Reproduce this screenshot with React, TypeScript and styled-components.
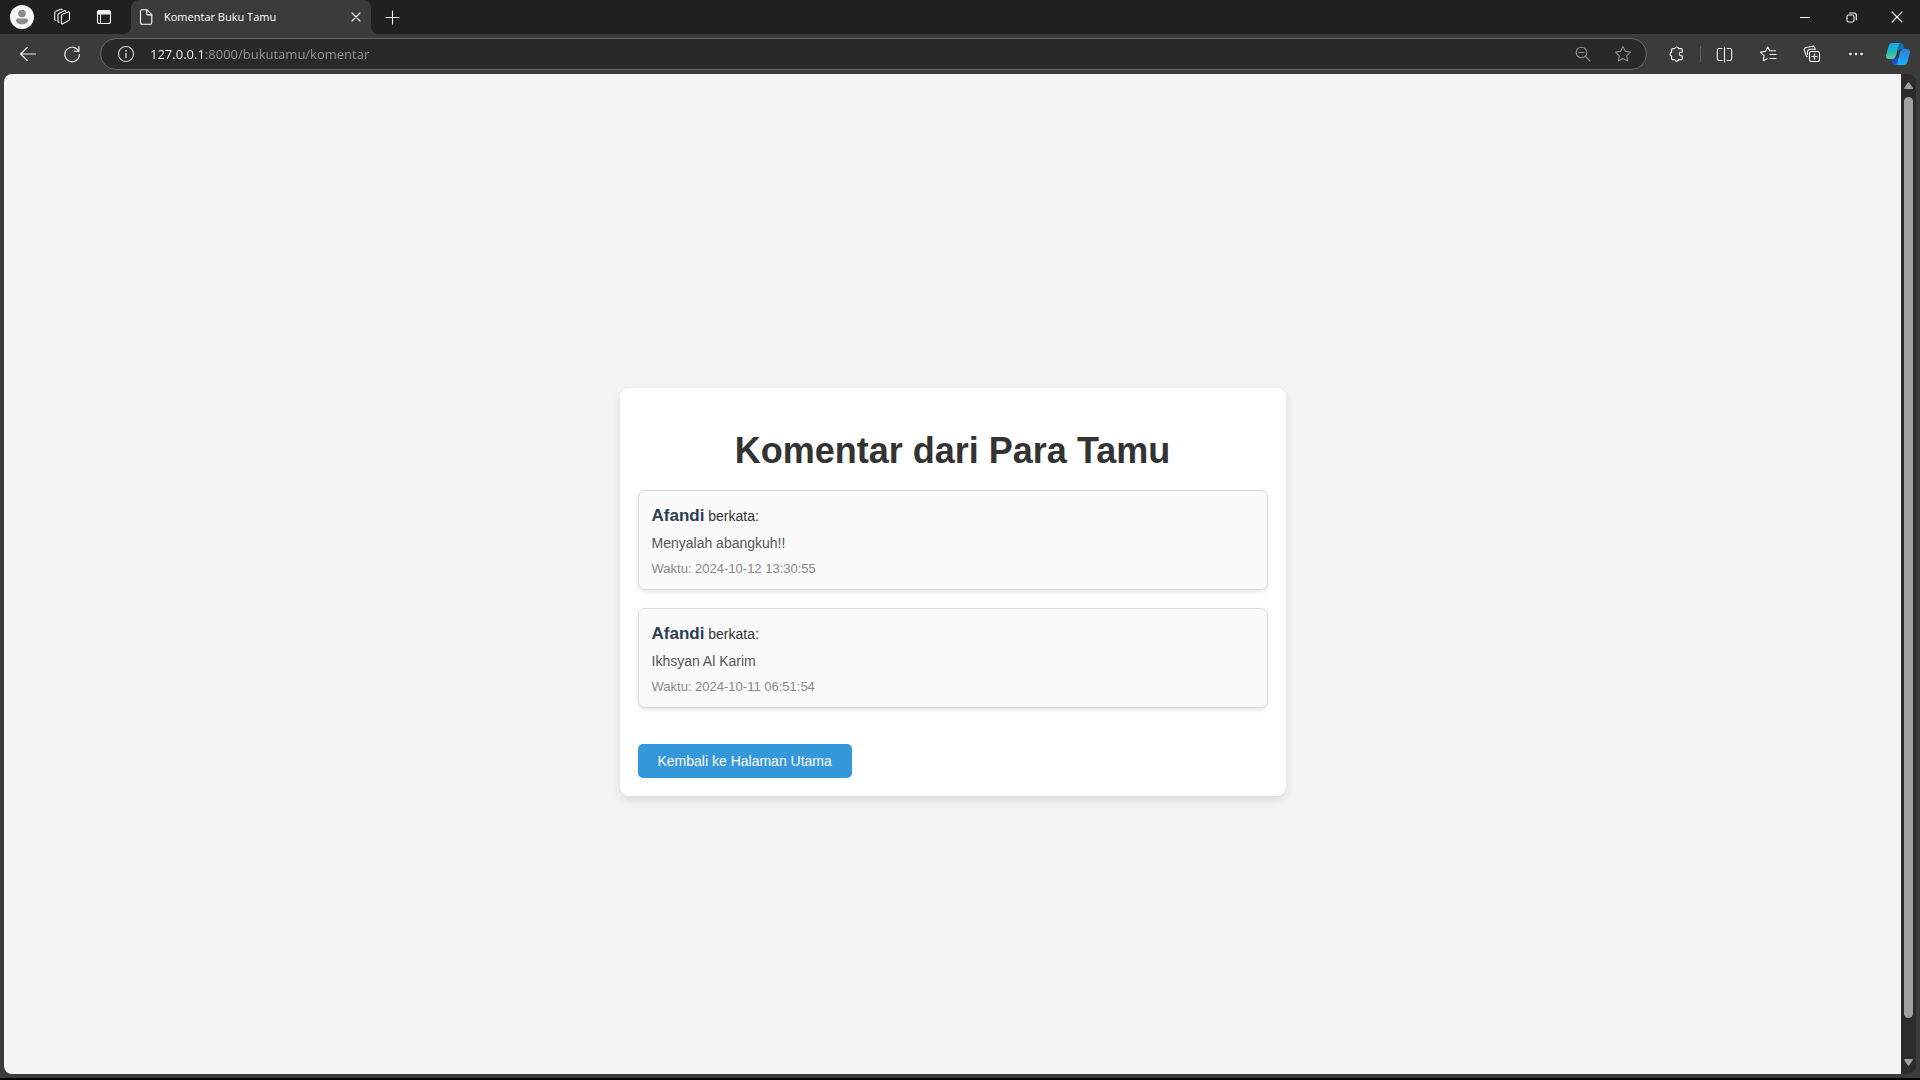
import React from "react";
import styled, { createGlobalStyle } from "styled-components";

const GlobalStyle = createGlobalStyle`
  *, *::before, *::after { box-sizing: border-box; }
  body { margin: 0; background: #000; }
  button { border: 0; padding: 0; background: none; color: inherit; font: inherit; cursor: pointer; }
`;

const uiFont = `"Segoe UI", "Open Sans", "Noto Sans", sans-serif`;

/* ---------- browser chrome ---------- */

const Browser = styled.div`
  display: flex;
  flex-direction: column;
  height: 100vh;
  background: #3b3b3b;
  border-bottom: 2px solid #000;
  color: #fff;
  font-family: ${uiFont};
`;

const TabStrip = styled.header`
  display: flex;
  align-items: stretch;
  height: 34px;
  background: #202020;
`;

const StripTools = styled.div`
  display: flex;
  align-items: center;
  width: 131px;
`;

const IconButton = styled.button<{ $width?: number }>`
  display: flex;
  flex: none;
  align-items: center;
  align-self: center;
  justify-content: center;
  width: ${(p) => p.$width ?? 44}px;
  height: 32px;
  color: ${(p) => p.color ?? "#f4f4f4"};
`;

const Tab = styled.div`
  position: relative;
  display: flex;
  align-items: center;
  gap: 10px;
  width: 240px;
  padding: 0 7px;
  background: #3b3b3b;
  border-radius: 8px 8px 0 0;

  &::before,
  &::after {
    content: "";
    position: absolute;
    bottom: 0;
    width: 8px;
    height: 8px;
  }
  &::before {
    right: 100%;
    background: radial-gradient(circle at 0 0, transparent 8px, #3b3b3b 8px);
  }
  &::after {
    left: 100%;
    background: radial-gradient(circle at 100% 0, transparent 8px, #3b3b3b 8px);
  }
`;

const TabTitle = styled.span`
  flex: 1;
  font-size: 11px;
  line-height: 16px;
  white-space: nowrap;
`;

const WindowControls = styled.div`
  display: flex;
  margin-left: auto;
`;

const Toolbar = styled.nav`
  display: flex;
  align-items: center;
  height: 40px;
  padding: 0 2px 0 6px;
`;

const AddressBar = styled.form`
  display: flex;
  flex: 1;
  align-items: center;
  height: 32px;
  margin: 0 7px 0 6px;
  padding: 0 3px;
  border: 1px solid #686868;
  border-radius: 16px;
  background: #292929;
`;

const AddressInput = styled.input`
  flex: 1;
  min-width: 0;
  height: 24px;
  padding: 0 0 0 2px;
  border: 0;
  outline: 0;
  color: #fff;
  background: linear-gradient(90deg, #fff 56px, #989898 56px);
  -webkit-background-clip: text;
  background-clip: text;
  -webkit-text-fill-color: transparent;
  font-family: ${uiFont};
  font-size: 13px;
`;

const Divider = styled.span`
  width: 1px;
  height: 16px;
  margin: 0 1px 0 2px;
  background: #5e5e5e;
`;

const Viewport = styled.div`
  display: flex;
  flex: 1;
  min-height: 0;
  margin: 0 4px 4px;
  border-radius: 8px;
  overflow: hidden;
`;

const ScrollBar = styled.div`
  display: flex;
  flex-direction: column;
  align-items: center;
  gap: 8px;
  width: 15px;
  padding: 8px 0;
  background: #2c2c2c;
  color: #9f9f9f;
`;

const ScrollTrack = styled.div`
  flex: 1;
  width: 9px;
`;

const ScrollThumb = styled.div`
  height: 96.5%;
  border-radius: 5px;
  background: #9f9f9f;
`;

/* ---------- guest book page ---------- */

const Page = styled.main`
  display: flex;
  flex: 1;
  align-items: center;
  justify-content: center;
  padding: 36px 18px 0;
  background: #f4f4f4;
  color: #333;
  font-family: Arial, "Liberation Sans", sans-serif;
  font-size: 14px;
`;

const Panel = styled.section`
  width: 100%;
  max-width: 666px;
  padding: 18px;
  border-radius: 9px;
  background: #fff;
  box-shadow: 0 4px 11px rgba(0, 0, 0, 0.1);
`;

const Heading = styled.h1`
  margin: 24px 0 18px;
  font-size: 36px;
  line-height: 42px;
  text-align: center;
`;

const CommentList = styled.ul`
  display: flex;
  flex-direction: column;
  gap: 18px;
  margin: 0 0 36px;
  padding: 0;
  list-style: none;
`;

const Comment = styled.li`
  display: flex;
  flex-direction: column;
  gap: 9px;
  padding: 14px 13px 10px;
  border: 1px solid #ddd;
  border-radius: 7px;
  background: #fafafa;
  box-shadow: 0 2px 4px rgba(0, 0, 0, 0.1);
`;

const Author = styled.div`
  line-height: 22px;

  strong {
    color: #2c3e50;
    font-size: 17px;
  }
`;

const Message = styled.p`
  margin: 0;
  color: #555;
  line-height: 14px;
`;

const Time = styled.time`
  color: #888;
  font-size: 13px;
  line-height: 20px;
`;

const BackLink = styled.a`
  display: block;
  width: fit-content;
  padding: 9px 20px;
  border-radius: 5px;
  background: #3498db;
  color: #fff;
  line-height: 16px;
  text-decoration: none;
`;

/* ---------- icons ---------- */

type IconProps = { size?: number; children: React.ReactNode };

const Icon = ({ size = 16, children }: IconProps) => (
  <svg
    width={size}
    height={size}
    viewBox={`0 0 ${size} ${size}`}
    fill="none"
    stroke="currentColor"
    strokeWidth="1.1"
    strokeLinecap="round"
    strokeLinejoin="round"
    aria-hidden="true"
  >
    {children}
  </svg>
);

const AvatarIcon = () => (
  <Icon size={24}>
    <circle cx="12" cy="12" r="12" fill="#f7f7f7" stroke="none" />
    <circle cx="12" cy="8.6" r="3.8" fill="#8b8b8b" stroke="none" />
    <path d="M7.6 13.6h8.8a1.6 1.6 0 0 1 1.6 1.6c0 2.400-2.500 4-6 4s-6-1.600-6-4a1.600 1.600 0 0 1 1.600-1.600z" fill="#8b8b8b" stroke="none" />
  </Icon>
);

const WorkspacesIcon = () => (
  <Icon size={18}>
    <path d="M9.200 6.600l5.800-2.600a1 1 0 0 1 1.500.9v6.300a1.600 1.600 0 0 1-.9 1.400l-5.700 3.200a1 1 0 0 1-1.500-.9V7.900a1.400 1.400 0 0 1 .8-1.300z" />
    <path d="M6.200 14.300a1.100 1.100 0 0 1-1.200-1.100V6.700a1.400 1.400 0 0 1 .8-1.300l5.400-2.600a1.200 1.200 0 0 1 1.600.5" />
    <path d="M2.900 12.400a1.100 1.100 0 0 1-1.200-1.100V4.900a1.400 1.400 0 0 1 .8-1.300l5-2.300a1.200 1.200 0 0 1 1.600.5" />
  </Icon>
);

const TabActionsIcon = () => (
  <Icon>
    <rect x="1.500" y="1.500" width="13" height="13" rx="2" />
    <path d="M1.500 3.500a2 2 0 0 1 2-2h9a2 2 0 0 1 2 2v1.500h-13z" fill="currentColor" />
    <path d="M4.500 5.500v9" />
  </Icon>
);

const FileIcon = () => (
  <Icon>
    <path d="M4 .7h4.800l5 5V13.800a1.500 1.500 0 0 1-1.500 1.500H4a1.500 1.500 0 0 1-1.500-1.500V2.200A1.500 1.500 0 0 1 4 .7z" />
    <path d="M8.700.8v4a1.100 1.100 0 0 0 1.100 1.100h4" />
  </Icon>
);

const CloseIcon = ({ size = 10 }: { size?: number }) => (
  <Icon size={size}>
    <path d={`M1 1L${size - 1} ${size - 1}M${size - 1} 1L1 ${size - 1}`} />
  </Icon>
);

const PlusIcon = () => (
  <Icon size={15}>
    <path d="M7.500 1v13M1 7.500h13" />
  </Icon>
);

const MinimizeIcon = () => (
  <Icon size={10}>
    <path d="M0 5.500h10" strokeWidth="1" strokeLinecap="butt" />
  </Icon>
);

const RestoreIcon = () => (
  <Icon size={11}>
    <rect x="1" y="3" width="7" height="7" rx="1.500" />
    <path d="M3.500 1h4.500a2.300 2.300 0 0 1 2.300 2.300V7.800" />
  </Icon>
);

const BackIcon = () => (
  <Icon>
    <path d="M15.500 8H.8M7.300 1.500L.6 8l6.700 6.500" />
  </Icon>
);

const ReloadIcon = () => (
  <Icon size={18}>
    <path d="M15.600 6.200A7.300 7.300 0 1 0 16.400 9.500" />
    <path d="M16 1.500v4.800h-4.800" />
  </Icon>
);

const InfoIcon = () => (
  <Icon size={18}>
    <circle cx="9" cy="9" r="7.500" />
    <path d="M9 8.300v4.200" strokeWidth="1.300" />
    <circle cx="9" cy="5.800" r=".9" fill="currentColor" stroke="none" />
  </Icon>
);

const ZoomOutIcon = () => (
  <Icon>
    <circle cx="6.500" cy="6.500" r="5.300" />
    <path d="M4 6.500h5M10.500 10.500l4.500 4.500" />
  </Icon>
);

const StarIcon = () => (
  <Icon size={18}>
    <path d="M9 1.600l2.300 4.700 5.100.8-3.700 3.700.9 5.200L9 13.500 4.400 16l.9-5.200L1.600 7.100l5.100-.8z" />
  </Icon>
);

const ExtensionsIcon = () => (
  <Icon>
    <path d="M4.800 2.600h2a2 2 0 0 1 3.900 0h2.400a1.200 1.200 0 0 1 1.200 1.200v2.300h-1a1.900 1.900 0 0 0 0 3.800h1v2.500a1.200 1.200 0 0 1-1.200 1.200h-2.400a2 2 0 0 1-3.900 0h-2a1.200 1.200 0 0 1-1.200-1.200V10a2 2 0 0 1 0-3.900V3.800a1.200 1.200 0 0 1 1.200-1.200z" />
  </Icon>
);

const SplitIcon = () => (
  <Icon size={17}>
    <path d="M6 2.500H3a1.700 1.700 0 0 0-1.700 1.700v8.600A1.700 1.700 0 0 0 3 14.500h3M11 2.500h3a1.700 1.700 0 0 1 1.700 1.700v8.600a1.700 1.700 0 0 1-1.700 1.700h-3M8.500 1v15" />
  </Icon>
);

const FavoritesIcon = () => (
  <Icon size={18}>
    <path d="M10.500 5.600L8.700 1.900 6.500 6.300l-5 .8 3.600 3.700-.8 4.900 3.900-2M10.500 5.700h6M11 9.500h6M11 13.500h6" />
  </Icon>
);

const CollectionsIcon = () => (
  <Icon size={18}>
    <rect x="6.500" y="6.500" width="10" height="10" rx="2" />
    <path d="M11.500 8.800v5.400M8.800 11.500h5.400" />
    <path d="M4.500 11.800a2 2 0 0 1-1.600-1.500L1.300 4.600a1.500 1.500 0 0 1 1.100-1.900l6.900-1.500a2 2 0 0 1 2.300 1.200l.6 1.600" />
    <path d="M4.500 9.500V6.800a2.500 2.500 0 0 1 2.500-2.500h5.200" />
  </Icon>
);

const MoreIcon = () => (
  <Icon>
    {[2.5, 8, 13.5].map((x) => (
      <circle key={x} cx={x} cy="8" r="1.300" fill="currentColor" stroke="none" />
    ))}
  </Icon>
);

const CopilotIcon = () => (
  <svg width="24" height="24" viewBox="0 0 24 24" aria-hidden="true">
    <defs>
      <linearGradient id="cpLeft" x1="0" y1="0" x2="0" y2="1">
        <stop offset="0" stopColor="#12a5e8" />
        <stop offset=".5" stopColor="#1fb8c4" />
        <stop offset="1" stopColor="#5ad18a" />
      </linearGradient>
      <linearGradient id="cpRight" x1="0" y1="0" x2="0" y2="1">
        <stop offset="0" stopColor="#2f79dc" />
        <stop offset="1" stopColor="#18b4fa" />
      </linearGradient>
    </defs>
    <path d="M10 1h4.500c2 0 2.900 1.300 3.400 3l.9 3h-3.300c-1.500 0-2.300.8-2.800 2l-1.500-1z" fill="#0b6fae" />
    <path d="M14 23H9.500c-2 0-2.800-1.300-3.300-3l-.8-3h3.200c1.500 0 2.300-.8 2.800-2l1.600 1z" fill="#1a4fd6" />
    <path d="M6.300 1h8.700c-1.500 0-2.200 1.200-2.600 2.800L10 13.500C9.400 15.800 8.400 17 6.300 17H2.700C.6 17-.3 15.300.2 13L2.600 4.300C3.200 2.200 4.300 1 6.300 1z" fill="url(#cpLeft)" />
    <path d="M17.700 23H9c1.500 0 2.200-1.200 2.600-2.800l2.400-9.700C14.600 8.200 15.600 7 17.700 7h3.600c2.100 0 3 1.700 2.500 4l-2.400 8.700c-.6 2.100-1.700 3.300-3.700 3.300z" fill="url(#cpRight)" />
  </svg>
);

const ArrowIcon = ({ down = false }: { down?: boolean }) => (
  <svg width="9" height="7" viewBox="0 0 9 7" aria-hidden="true">
    <path
      d={down ? "M.8 0h7.400q1 0 .6 1L5.500 6q-1 1.600-2 0L.2 1Q-.2 0 .8 0z" : "M.8 7h7.400q1 0 .6-1L5.500 1q-1-1.600-2 0L.2 6q-.4 1 .6 1z"}
      fill="currentColor"
    />
  </svg>
);

/* ---------- data ---------- */

const comments = [
  { author: "Afandi", message: "Menyalah abangkuh!!", time: "2024-10-12 13:30:55" },
  { author: "Afandi", message: "Ikhsyan Al Karim", time: "2024-10-11 06:51:54" },
];

export default function App() {
  return (
    <>
      <GlobalStyle />
      <Browser>
        <TabStrip>
          <StripTools>
            <IconButton aria-label="Profile"><AvatarIcon /></IconButton>
            <IconButton $width={36} aria-label="Workspaces"><WorkspacesIcon /></IconButton>
            <IconButton $width={48} aria-label="Tab actions"><TabActionsIcon /></IconButton>
          </StripTools>
          <Tab>
            <FileIcon />
            <TabTitle>Komentar Buku Tamu</TabTitle>
            <IconButton $width={16} aria-label="Close tab"><CloseIcon /></IconButton>
          </Tab>
          <IconButton $width={43} aria-label="New tab"><PlusIcon /></IconButton>
          <WindowControls>
            <IconButton $width={46} aria-label="Minimize"><MinimizeIcon /></IconButton>
            <IconButton $width={46} aria-label="Restore"><RestoreIcon /></IconButton>
            <IconButton $width={46} aria-label="Close"><CloseIcon size={12} /></IconButton>
          </WindowControls>
        </TabStrip>

        <Toolbar>
          <IconButton aria-label="Back"><BackIcon /></IconButton>
          <IconButton aria-label="Reload"><ReloadIcon /></IconButton>
          <AddressBar onSubmit={(e) => e.preventDefault()}>
            <IconButton type="button" aria-label="Site information" color="#d8d8d8"><InfoIcon /></IconButton>
            <AddressInput
              type="text"
              aria-label="Address"
              spellCheck={false}
              defaultValue="127.0.0.1:8000/bukutamu/komentar"
            />
            <IconButton type="button" $width={40} aria-label="Zoom out" color="#8f8f8f"><ZoomOutIcon /></IconButton>
            <IconButton type="button" $width={40} aria-label="Add to favorites" color="#8f8f8f"><StarIcon /></IconButton>
          </AddressBar>
          <IconButton aria-label="Extensions"><ExtensionsIcon /></IconButton>
          <Divider />
          <IconButton aria-label="Split screen"><SplitIcon /></IconButton>
          <IconButton aria-label="Favorites"><FavoritesIcon /></IconButton>
          <IconButton aria-label="Collections"><CollectionsIcon /></IconButton>
          <IconButton aria-label="Settings and more"><MoreIcon /></IconButton>
          <IconButton $width={40} aria-label="Copilot"><CopilotIcon /></IconButton>
        </Toolbar>

        <Viewport>
          <Page>
            <Panel>
              <Heading>Komentar dari Para Tamu</Heading>
              <CommentList>
                {comments.map((c) => (
                  <Comment key={c.time}>
                    <Author>
                      <strong>{c.author}</strong> berkata:
                    </Author>
                    <Message>{c.message}</Message>
                    <Time>Waktu: {c.time}</Time>
                  </Comment>
                ))}
              </CommentList>
              <BackLink href="#">Kembali ke Halaman Utama</BackLink>
            </Panel>
          </Page>
          <ScrollBar aria-hidden="true">
            <ArrowIcon />
            <ScrollTrack>
              <ScrollThumb />
            </ScrollTrack>
            <ArrowIcon down />
          </ScrollBar>
        </Viewport>
      </Browser>
    </>
  );
}
